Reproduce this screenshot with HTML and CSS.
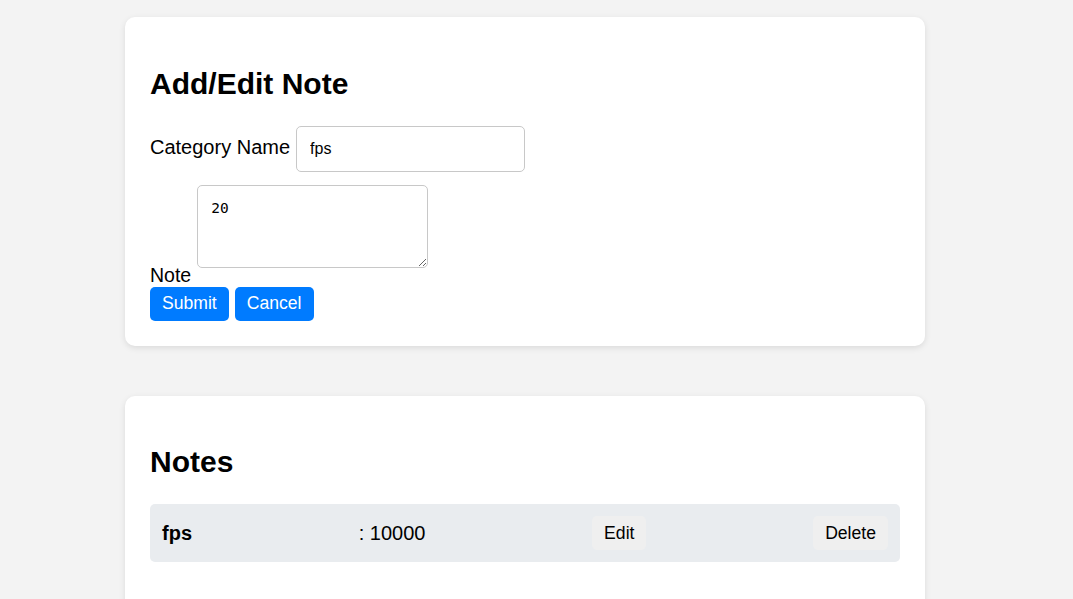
FILE: index.html
```html
<!DOCTYPE html>
<html lang="en">
<head>
<meta charset="utf-8">
<title>Notes</title>
<link rel="stylesheet" href="styles.css">
</head>
<body>
<main class="page">
  <section class="card">
    <h2 class="card-title">Add/Edit Note</h2>
    <form class="note-form">
      <div class="field-row field-row-center">
        <label class="label-lg" for="cat">Category Name</label>
        <input class="text-input" id="cat" type="text" value="fps">
      </div>
      <div class="field-row field-row-end">
        <label class="label-md" for="note">Note</label>
        <textarea class="note-area" id="note">20</textarea>
      </div>
      <div class="actions">
        <button type="button" class="btn-primary">Submit</button>
        <button type="button" class="btn-primary">Cancel</button>
      </div>
    </form>
  </section>

  <section class="card">
    <h2 class="card-title">Notes</h2>
    <ul class="note-list">
      <li class="note-item">
        <strong class="note-key">fps</strong>
        <span class="note-value">: 10000</span>
        <button type="button" class="btn-plain">Edit</button>
        <button type="button" class="btn-plain">Delete</button>
      </li>
    </ul>
  </section>
</main>
</body>
</html>
```

FILE: styles.css
```css
* {
  box-sizing: border-box;
}

html, body {
  margin: 0;
  background: #f3f3f3;
}

body {
  font-family: "Liberation Sans", Arial, sans-serif;
  color: #000;
}

.page {
  display: flex;
  flex-direction: column;
  align-items: center;
  gap: 50px;
  padding-top: 17px;
  padding-right: 23px;
}

.card {
  width: 800px;
  background: #fff;
  border-radius: 10px;
  box-shadow: 0 2px 6px rgba(0, 0, 0, 0.1);
  padding: 25px;
}

.card-title {
  font-size: 30px;
  font-weight: bold;
  margin: 24.9px 0;
}

.note-form {
  display: flex;
  flex-direction: column;
}

.field-row {
  display: flex;
  gap: 6px;
}

.field-row-center {
  align-items: center;
  margin-bottom: 13px;
}

.field-row-end {
  align-items: flex-end;
}

.label-lg {
  font-size: 20px;
  padding-bottom: 2px;
}

.label-md {
  font-size: 19.5px;
}

.text-input {
  width: 229px;
  height: 46px;
  border: 1px solid #c8c8c8;
  border-radius: 5px;
  padding: 0 13px;
  font-family: "Liberation Sans", Arial, sans-serif;
  font-size: 16px;
  color: #000;
  background: #fff;
}

.note-area {
  width: 231px;
  height: 83px;
  border: 1px solid #c8c8c8;
  border-radius: 5px;
  padding: 14px 13px;
  margin-bottom: 19px;
  font-family: "DejaVu Sans Mono", monospace;
  font-size: 14.5px;
  color: #000;
  background: #fff;
}

.actions {
  display: flex;
  gap: 6px;
}

.btn-primary {
  background: #007bff;
  color: #fff;
  border: none;
  border-radius: 5px;
  font-family: "Liberation Sans", Arial, sans-serif;
  font-size: 17.6px;
  padding: 6.4px 12px;
  cursor: pointer;
}

.note-list {
  list-style: none;
  margin: 16px 0 24px;
  padding: 0;
}

.note-item {
  display: flex;
  justify-content: space-between;
  align-items: center;
  background: #e9ecef;
  border-radius: 5px;
  padding: 12px;
  font-size: 20px;
}

.note-key {
  font-weight: bold;
}

.btn-plain {
  background: #efefef;
  color: #000;
  border: none;
  border-radius: 5px;
  font-family: "Liberation Sans", Arial, sans-serif;
  font-size: 17.6px;
  padding: 6.4px 12px;
  cursor: pointer;
}
```
